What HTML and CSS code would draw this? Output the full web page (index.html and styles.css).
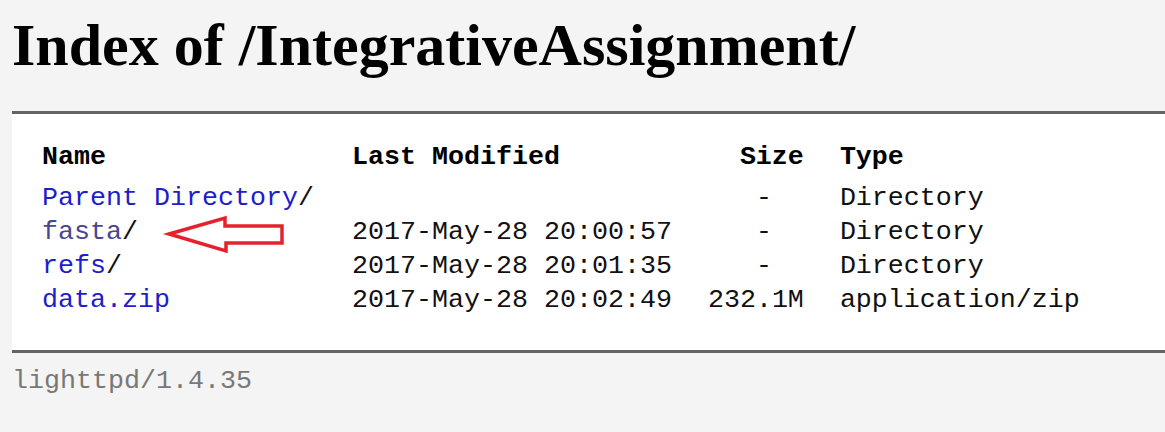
FILE: index.html
```html
<!DOCTYPE html>
<html>
<head>
<meta charset="utf-8">
<title>Index of /IntegrativeAssignment/</title>
<link rel="stylesheet" href="styles.css">
</head>
<body>
<h2 class="title">Index of /IntegrativeAssignment/</h2>
<div class="list">
  <table class="listing">
    <thead>
      <tr><th class="n">Name</th><th class="m">Last Modified</th><th class="s">Size</th><th class="t">Type</th></tr>
    </thead>
    <tbody>
      <tr><td class="n"><a href="../">Parent Directory</a>/</td><td class="m"></td><td class="s">-&nbsp;&nbsp;</td><td class="t">Directory</td></tr>
      <tr><td class="n"><a class="visited" href="fasta/">fasta</a>/</td><td class="m">2017-May-28 20:00:57</td><td class="s">-&nbsp;&nbsp;</td><td class="t">Directory</td></tr>
      <tr><td class="n"><a href="refs/">refs</a>/</td><td class="m">2017-May-28 20:01:35</td><td class="s">-&nbsp;&nbsp;</td><td class="t">Directory</td></tr>
      <tr><td class="n"><a href="data.zip">data.zip</a></td><td class="m">2017-May-28 20:02:49</td><td class="s">232.1M</td><td class="t">application/zip</td></tr>
    </tbody>
  </table>
</div>
<div class="foot">lighttpd/1.4.35</div>
<svg class="annotation" width="1165" height="432" viewBox="0 0 1165 432" aria-hidden="true">
  <polygon points="169,234 225,218 225,226 282,226 282,243 226,243 226,251" fill="none" stroke="#e5222b" stroke-width="3.5" stroke-linejoin="miter"/>
</svg>
</body>
</html>
```
FILE: styles.css
```css
html, body {
  margin: 0;
  padding: 0;
}
body {
  background-color: #f4f4f4;
  padding: 9px 0 0 12px;
  position: relative;
  min-height: 432px;
  box-sizing: border-box;
}
.title {
  font-family: "Liberation Serif", "Times New Roman", serif;
  font-weight: bold;
  font-size: 60px;
  line-height: 72px;
  margin: 0 0 30px 0;
  color: #000;
}
.list {
  background-color: #fff;
  border-top: 3px solid #646464;
  border-bottom: 3px solid #646464;
  padding: 26px 0 33px 30px;
}
.listing {
  border-collapse: collapse;
  border-spacing: 0;
}
.listing th, .listing td {
  font-family: "Liberation Mono", "Courier New", monospace;
  font-size: 26.67px;
  line-height: 34px;
  text-align: left;
  padding: 0 36px 0 0;
  white-space: pre;
  color: #111;
}
.listing th {
  font-weight: bold;
  padding-bottom: 7px;
  color: #000;
}
.listing .n {
  padding-right: 38px;
}
.listing .s {
  text-align: right;
}
a {
  text-decoration: none;
  color: #1d1dcc;
}
a.visited {
  color: #48468f;
}
.foot {
  font-family: "Liberation Mono", "Courier New", monospace;
  font-size: 26.67px;
  line-height: 34px;
  color: #787878;
  padding-top: 11px;
}
.annotation {
  position: absolute;
  top: 0;
  left: 0;
  pointer-events: none;
}
```
